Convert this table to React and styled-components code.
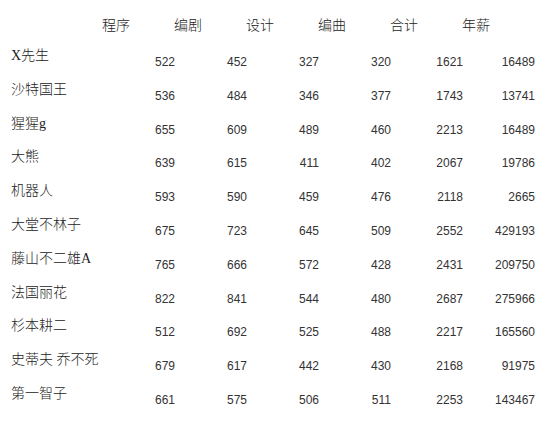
import React from 'react';
import styled, { createGlobalStyle } from 'styled-components';

const GlobalStyle = createGlobalStyle`
    body {
        margin: 0;
        background: #ffffff;
    }
`;

const Page = styled.div`
    width: 549px;
    height: 422px;
    padding-top: 16px;
    box-sizing: border-box;
    color: #222222;
    overflow: hidden;
`;

const HeaderRow = styled.div`
    display: grid;
    grid-template-columns: repeat(6, 72px);
    padding-left: 80px;
    height: 20px;
`;

const HeadCell = styled.div`
    text-align: center;
    font-family: "Liberation Serif", "Noto Sans CJK SC", serif;
    font-size: 14px;
    font-weight: 300;
    line-height: 20px;
`;

const Row = styled.div`
    display: grid;
    grid-template-columns: 92px repeat(6, 72px);
    padding-left: 11px;
    height: 33.8px;
`;

const NameCell = styled.div`
    padding-top: 10px;
    font-family: "Liberation Serif", "Noto Sans CJK SC", serif;
    font-size: 14px;
    font-weight: 300;
    line-height: 20px;
    white-space: nowrap;
`;

const NumCell = styled.div`
    padding-top: 16px;
    text-align: right;
    font-family: "Liberation Sans", Arial, sans-serif;
    font-size: 12px;
    line-height: 20px;
    color: #333333;
`;

const headers = ['程序', '编剧', '设计', '编曲', '合计', '年薪'];

const rows = [
    ['X先生', 522, 452, 327, 320, 1621, 16489],
    ['沙特国王', 536, 484, 346, 377, 1743, 13741],
    ['猩猩g', 655, 609, 489, 460, 2213, 16489],
    ['大熊', 639, 615, 411, 402, 2067, 19786],
    ['机器人', 593, 590, 459, 476, 2118, 2665],
    ['大堂不林子', 675, 723, 645, 509, 2552, 429193],
    ['藤山不二雄A', 765, 666, 572, 428, 2431, 209750],
    ['法国丽花', 822, 841, 544, 480, 2687, 275966],
    ['杉本耕二', 512, 692, 525, 488, 2217, 165560],
    ['史蒂夫 乔不死', 679, 617, 442, 430, 2168, 91975],
    ['第一智子', 661, 575, 506, 511, 2253, 143467],
];

const App = () => {
    return (
        <Page>
            <GlobalStyle/>
            <HeaderRow>
                {headers.map((h) => (
                    <HeadCell key={h}>{h}</HeadCell>
                ))}
            </HeaderRow>
            {rows.map(([name, ...nums]) => (
                <Row key={name}>
                    <NameCell>{name}</NameCell>
                    {nums.map((n, i) => (
                        <NumCell key={i}>{n}</NumCell>
                    ))}
                </Row>
            ))}
        </Page>
    );
};

export default App;
